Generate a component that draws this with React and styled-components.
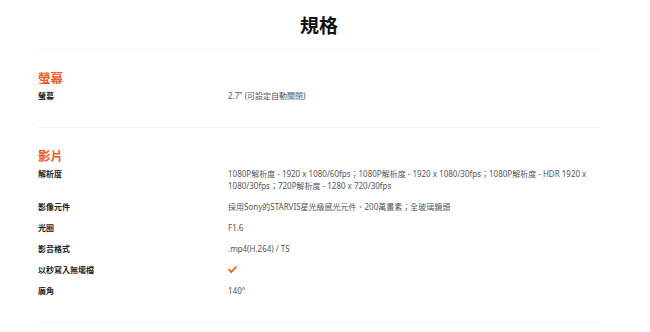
import React from "react";
import styled, { createGlobalStyle } from "styled-components";

const Global = createGlobalStyle`
  html, body { margin: 0; padding: 0; background: #fff; }
  body { font-family: "Noto Sans", "Noto Sans CJK TC", sans-serif; }
`;

const Page = styled.div`
  width: 650px;
  padding: 0 50px 0 38px;
  box-sizing: border-box;
`;

const Title = styled.h1`
  margin: 0;
  height: 49px;
  display: flex;
  align-items: center;
  justify-content: center;
  font-size: 19px;
  font-weight: 700;
  color: #111;
  font-family: "Noto Sans CJK TC", sans-serif;
  border-bottom: 1px solid #f3f3f3;
`;

const Section = styled.section`
  padding: 18px 0 18px;
  border-bottom: 1px solid #f3f3f3;
`;

const Heading = styled.h2`
  margin: 0;
  font-size: 12.5px;
  line-height: 20px;
  font-weight: 700;
  color: #f15a22;
  font-family: "Noto Sans CJK TC", sans-serif;
`;

const Row = styled.div`
  display: grid;
  grid-template-columns: 190px 360px;
  padding: 2px 0 7px;
`;

const Label = styled.div`
  font-size: 8px;
  line-height: 12px;
  font-weight: 700;
  color: #222;
  font-family: "Noto Sans CJK TC", sans-serif;
`;

const Value = styled.div`
  font-size: 8px;
  line-height: 12px;
  color: #555;
  font-family: "Noto Sans", "Noto Sans CJK TC", sans-serif;
`;

const Check = styled.svg`
  display: block;
  margin-top: 2px;
`;

const CheckIcon = () => (
  <Check width="9" height="7" viewBox="0 0 9 7">
    <path d="M1 3.6 L3.4 6 L8 1" fill="none" stroke="#f15a22" strokeWidth="1.8" strokeLinecap="round" strokeLinejoin="round" />
  </Check>
);

const video = [
  ["解析度", "1080P解析度 - 1920 x 1080/60fps；1080P解析度 - 1920 x 1080/30fps；1080P解析度 - HDR 1920 x 1080/30fps；720P解析度 - 1280 x 720/30fps"],
  ["影像元件", "採用Sony的STARVIS星光級感光元件、200萬畫素；全玻璃鏡頭"],
  ["光圈", "F1.6"],
  ["影音格式", ".mp4(H.264) / TS"],
  ["以秒寫入無壞檔", <CheckIcon />],
  ["廣角", "140°"],
];

export default function App() {
  return (
    <Page>
      <Global />
      <Title>規格</Title>
      <Section>
        <Heading>螢幕</Heading>
        <Row>
          <Label>螢幕</Label>
          <Value>2.7" (可設定自動關閉)</Value>
        </Row>
      </Section>
      <Section>
        <Heading>影片</Heading>
        {video.map(([k, v]) => (
          <Row key={k}>
            <Label>{k}</Label>
            <Value>{v}</Value>
          </Row>
        ))}
      </Section>
    </Page>
  );
}
